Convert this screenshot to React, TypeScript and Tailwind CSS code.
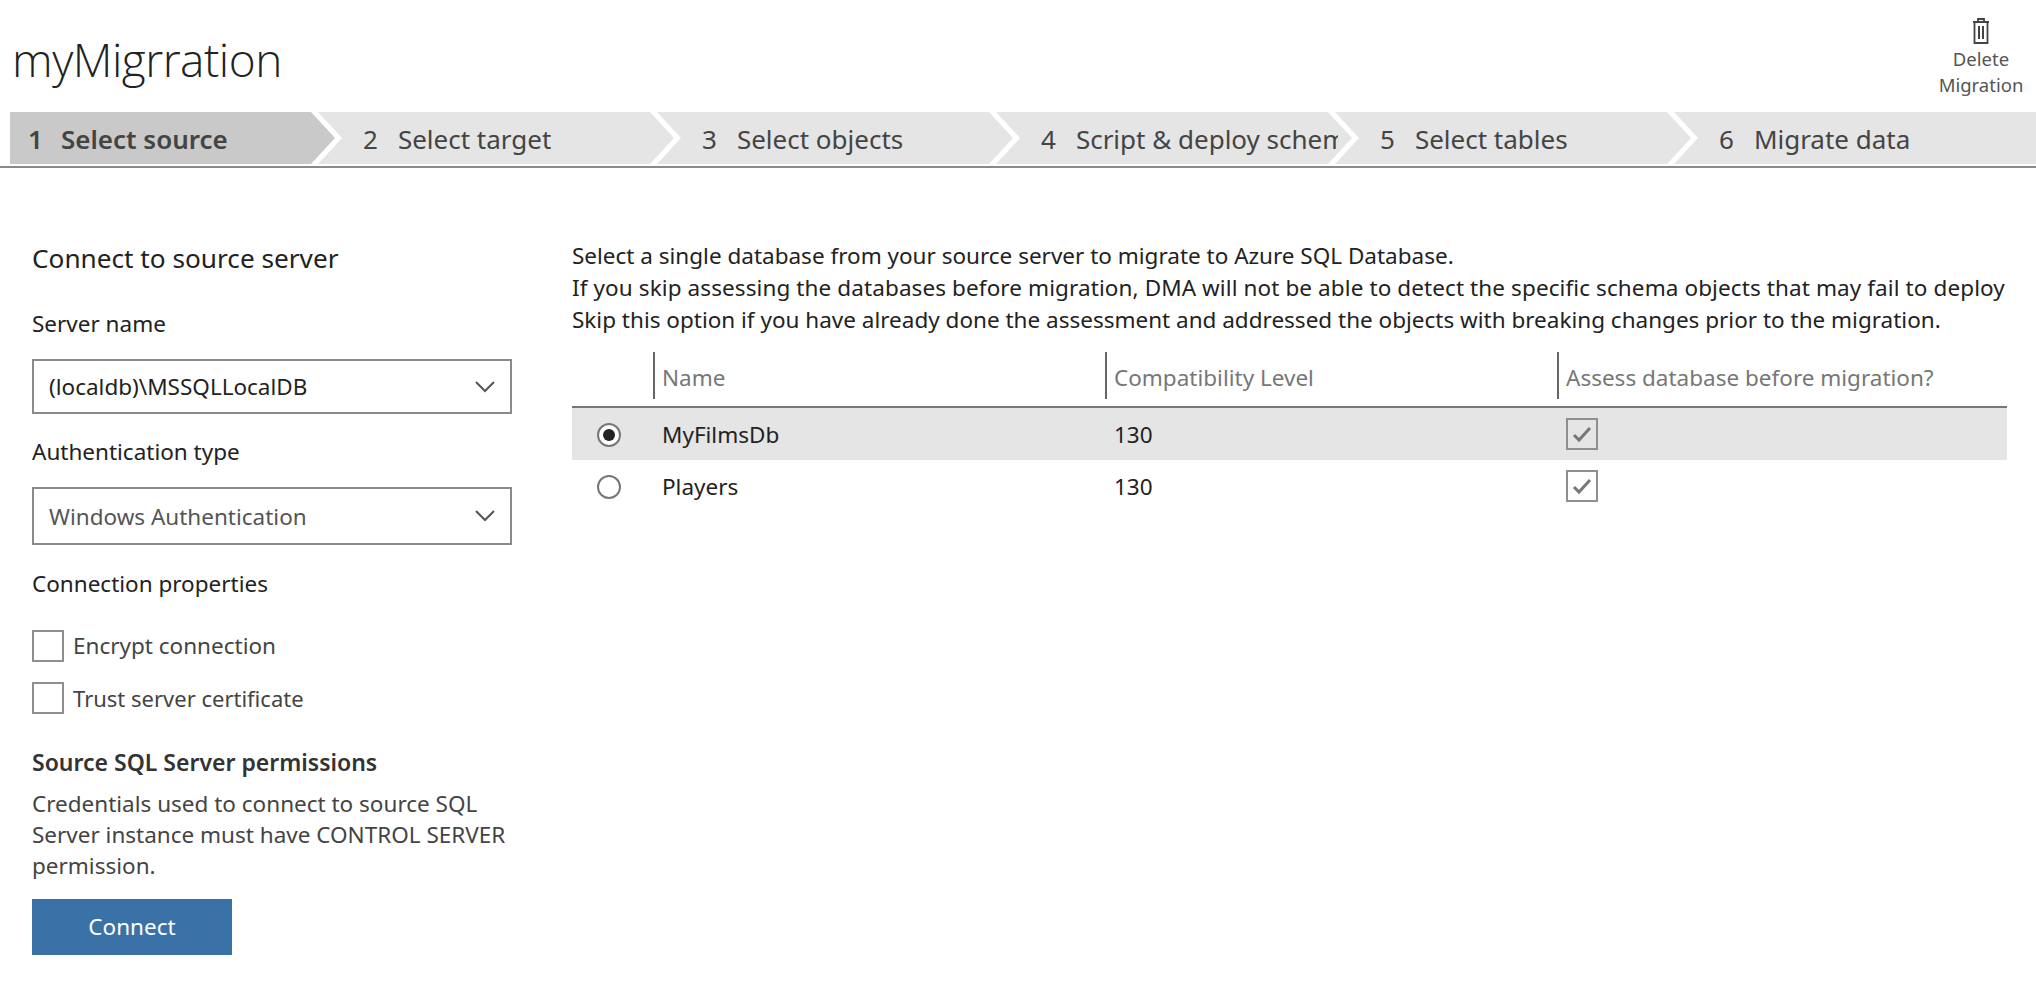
import React from 'react';

const steps = [
  { n: '2', label: 'Select target' },
  { n: '3', label: 'Select objects' },
  { n: '4', label: 'Script & deploy schema' },
  { n: '5', label: 'Select tables' },
];

const rows = [
  { name: 'MyFilmsDb', level: '130', selected: true },
  { name: 'Players', level: '130', selected: false },
];

function TrashIcon() {
  return (
    <svg width="20" height="28" viewBox="0 0 20 28" fill="none" stroke="#444" strokeWidth="1.8">
      <path d="M2 5h16M7 5V2h6v3M3.5 5v21h13V5" />
      <path d="M8 9v13M12 9v13" strokeWidth="2" />
    </svg>
  );
}

function Select({ value, muted }: { value: string; muted?: boolean }) {
  return (
    <div className="flex h-full w-[480px] items-center justify-between border-2 border-[#8a8a8a] pl-[15px] pr-[15px]">
      <span className={muted ? 'pt-[1px] text-[#555]' : 'text-[#222]'}>{value}</span>
      <svg width="20" height="12" viewBox="0 0 20 12" fill="none" stroke="#555" strokeWidth="2">
        <path d="M1 1l9 9 9-9" />
      </svg>
    </div>
  );
}

function Checkbox({ checked }: { checked?: boolean }) {
  return (
    <div className="flex h-[32px] w-[32px] shrink-0 items-center justify-center border-2 border-[#8f8f8f]">
      {checked && (
        <svg width="20" height="17" viewBox="0 0 20 17" fill="none" stroke="#777" strokeWidth="3">
          <path d="M2 9l5 5L18 2" />
        </svg>
      )}
    </div>
  );
}

export default function App() {
  return (
    <div className="h-[984px] w-[2036px] overflow-hidden bg-white font-['Noto_Sans',sans-serif] text-[22.5px] text-[#222]">
      {/* Title */}
      <div className="flex h-[112px] items-start justify-between pr-[9px]">
        <h1 className="pl-[12px] pt-[29px] font-['Open_Sans',sans-serif] text-[46px] leading-[60px] font-light tracking-[-0.5px] text-[#222]">myMigrration</h1>
        <div className="flex w-[92px] flex-col items-center pt-[17px] text-center text-[18.5px] leading-[26px] text-[#555]">
          <TrashIcon />
          <span className="mt-[1px]">Delete</span>
          <span>Migration</span>
        </div>
      </div>

      {/* Steps */}
      <div className="border-b-[2px] border-[#8a8a8a] pb-[2px] pl-[10px] text-[26px]">
        <div className="flex h-[52px] items-stretch">
          <div className="flex w-[325px] shrink-0 items-center bg-[#c9c9c9] pl-[18px] pt-[2px] font-semibold text-[#444] [clip-path:polygon(0_0,301px_0,100%_50%,301px_100%,0_100%)]">
            <span className="mr-[18px]">1</span>Select source
          </div>
          {steps.map((s) => (
            <div
              key={s.n}
              className="-ml-[17px] flex w-[356px] shrink-0 items-center overflow-hidden bg-[#e5e5e5] pl-[45px] pr-[14px] pt-[2px] whitespace-nowrap text-[#444] [clip-path:polygon(0_0,332px_0,100%_50%,332px_100%,0_100%,24px_50%)]"
            >
              <span className="mr-[20px]">{s.n}</span>
              <span className="overflow-hidden">{s.label}</span>
            </div>
          ))}
          <div className="-ml-[17px] flex flex-1 items-center bg-[#e5e5e5] pl-[45px] pt-[2px] whitespace-nowrap text-[#444] [clip-path:polygon(0_0,100%_0,100%_100%,0_100%,24px_50%)]">
            <span className="mr-[20px]">6</span>Migrate data
          </div>
        </div>
      </div>

      {/* Body */}
      <div className="flex pt-[72px]">
        <div className="w-[572px] shrink-0 pl-[32px]">
          <h2 className="text-[26.2px] leading-[36px]">Connect to source server</h2>
          <div className="mt-[33px] leading-[30px]">Server name</div>
          <div className="mt-[20px] h-[55px]">
            <Select value="(localdb)\MSSQLLocalDB" />
          </div>
          <div className="mt-[23px] leading-[30px]">Authentication type</div>
          <div className="mt-[20px] h-[58px]">
            <Select value="Windows Authentication" muted />
          </div>
          <div className="mt-[24px] leading-[30px]">Connection properties</div>
          <div className="mt-[30px] flex items-center gap-[9px]">
            <Checkbox />
            <span className="text-[#444]">Encrypt connection</span>
          </div>
          <div className="mt-[19px] flex items-center gap-[9px]">
            <Checkbox />
            <span className="text-[22px] text-[#444]">Trust server certificate</span>
          </div>
          <div className="mt-[32px] text-[23px] leading-[30px] font-semibold text-[#333]">Source SQL Server permissions</div>
          <p className="mt-[11px] w-[490px] leading-[31px] text-[#444]">
            Credentials used to connect to source SQL Server instance must have CONTROL SERVER permission.
          </p>
          <button className="mt-[18px] flex h-[56px] w-[200px] items-center justify-center bg-[#3a72a8] text-white">Connect</button>
        </div>

        <div className="w-[1435px] shrink-0">
          <div className="overflow-hidden leading-[32px] whitespace-nowrap">
            <div>Select a single database from your source server to migrate to Azure SQL Database.</div>
            <div className="tracking-[0.1px]">If you skip assessing the databases before migration, DMA will not be able to detect the specific schema objects that may fail to deploy on Azure SQL Database.</div>
            <div>Skip this option if you have already done the assessment and addressed the objects with breaking changes prior to the migration.</div>
          </div>

          <div className="mt-[16px] grid h-[56px] grid-cols-[81px_452px_452px_1fr] border-b-[2px] border-[#777] pb-[7px] text-[#777]">
            <div />
            {['Name', 'Compatibility Level', 'Assess database before migration?'].map((h) => (
              <div key={h} className="flex items-center border-l-[2px] border-[#666] pl-[7px] pt-[5px]">
                {h}
              </div>
            ))}
          </div>

          {rows.map((r) => (
            <div
              key={r.name}
              className={`grid h-[52px] grid-cols-[81px_452px_452px_1fr] items-center ${r.selected ? 'bg-[#e5e5e5]' : ''}`}
            >
              <div className="flex justify-center pr-[7px] pt-[2px]">
                <div className="flex h-[24px] w-[24px] items-center justify-center rounded-full border-2 border-[#777] bg-white">
                  {r.selected && <div className="h-[12px] w-[12px] rounded-full bg-[#222]" />}
                </div>
              </div>
              <div className="pl-[9px] pt-[2px]">{r.name}</div>
              <div className="pl-[9px] pt-[2px]">{r.level}</div>
              <div className="pl-[9px]">
                <Checkbox checked />
              </div>
            </div>
          ))}
        </div>
      </div>
    </div>
  );
}
